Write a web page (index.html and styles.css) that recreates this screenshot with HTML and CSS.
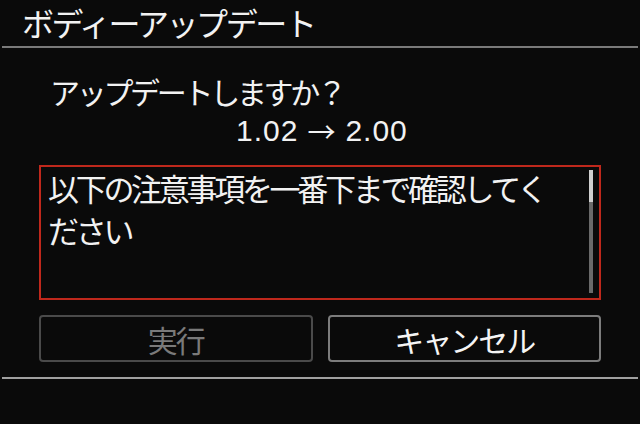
FILE: index.html
```html
<!DOCTYPE html>
<html lang="ja">
<head>
<meta charset="utf-8">
<title>ボディーアップデート</title>
<link rel="stylesheet" href="styles.css">
</head>
<body>
<div class="screen">
  <header class="title-bar">
    <h1 class="title">ボディーアップデート</h1>
  </header>
  <main class="content">
    <p class="question">アップデートしますか？</p>
    <p class="version"><span class="ver">1.02</span><span class="arrow">→</span><span class="ver">2.00</span></p>
    <div class="notice">
      <p class="notice-text">以下の注意事項を一番下まで確認してください</p>
      <div class="scrollbar"><div class="thumb"></div></div>
    </div>
    <div class="buttons">
      <button class="btn btn-disabled" disabled>実行</button>
      <button class="btn">キャンセル</button>
    </div>
  </main>
  <div class="footer-line"></div>
</div>
</body>
</html>
```

FILE: styles.css
```css
* { box-sizing: border-box; }
html, body {
  margin: 0;
  padding: 0;
  background: #0a0a0a;
}
.screen {
  width: 640px;
  height: 424px;
  background: #0a0a0a;
  color: #f2f2f2;
  font-family: "Noto Sans CJK JP", "Noto Sans", sans-serif;
  display: flex;
  flex-direction: column;
  overflow: hidden;
}
.title-bar {
  height: 48px;
  margin: 0 2px;
  border-bottom: 2px solid #7a7a7a;
  padding-left: 20px;
}
.title {
  margin: 0;
  font-weight: 400;
  font-size: 32px;
  letter-spacing: -2.4px;
  line-height: 44px;
}
.content {
  padding: 0 39px;
  display: flex;
  flex-direction: column;
}
.question {
  margin: 25px 0 0;
  padding-left: 11px;
  font-size: 30px;
  letter-spacing: -3.3px;
  line-height: 36px;
  height: 36px;
}
.version {
  margin: 6px 0 0;
  padding-left: 197px;
  display: flex;
  align-items: center;
  height: 32px;
  font-size: 30px;
  line-height: 32px;
}
.ver {
  font-family: "Liberation Sans", sans-serif;
  letter-spacing: 1px;
}
.arrow {
  font-family: "Noto Sans CJK JP", sans-serif;
  font-size: 28px;
  margin: 0 10px 0 9px;
}
.notice {
  margin-top: 18px;
  height: 135px;
  border: 2px solid #c0281c;
  display: flex;
  padding: 3px 6px 5px 7px;
}
.notice-text {
  flex: 1;
  margin: -3px 0 0;
  font-size: 31px;
  letter-spacing: -3.3px;
  line-height: 42px;
  padding-right: 20px;
}
.scrollbar {
  width: 4px;
  background: #6a6a6a;
  display: flex;
  flex-direction: column;
}
.thumb {
  height: 32px;
  background: #d0d0d0;
}
.buttons {
  margin-top: 15px;
  display: grid;
  grid-template-columns: 1fr 1fr;
  gap: 15px;
}
.btn {
  height: 47px;
  background: #0a0a0a;
  border: 2px solid #7c7c7c;
  border-radius: 4px;
  color: #f5f5f5;
  font-family: "Noto Sans CJK JP", "Noto Sans", sans-serif;
  font-size: 30px;
  letter-spacing: -2px;
  line-height: 40px;
  padding: 0;
}
.btn-disabled {
  color: #7a7a7a;
  border-color: #4a4a4a;
}
.footer-line {
  margin: 15px 2px 0;
  height: 2px;
  background: #a0a0a0;
}
```
